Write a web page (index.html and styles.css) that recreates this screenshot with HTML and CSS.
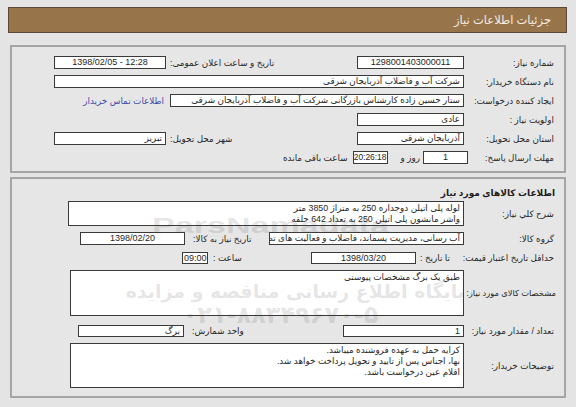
FILE: index.html
```html
<!DOCTYPE html>
<html lang="fa" dir="rtl">
<head>
<meta charset="utf-8">
<title>جزئیات اطلاعات نیاز</title>
<link rel="stylesheet" href="styles.css">
</head>
<body>
<div class="header">جزئیات اطلاعات نیاز</div>

<div class="panel p1">
  <div class="row">
    <div class="lbl">شماره نیاز:</div>
    <div class="box w107 c ltr">1298001403000011</div>
    <div class="lbl2 w191">تاریخ و ساعت اعلان عمومی:</div>
    <div class="box w112 c ltr">1398/02/05 - 12:28</div>
  </div>
  <div class="row">
    <div class="lbl">نام دستگاه خریدار:</div>
    <div class="box w410">شرکت آب و فاضلاب آذربایجان شرقی</div>
  </div>
  <div class="row">
    <div class="lbl">ایجاد کننده درخواست:</div>
    <div class="box w294">ستار حسین زاده کارشناس بازرگانی شرکت آب و فاضلاب آذربایجان شرقی</div>
    <a class="link" href="#">اطلاعات تماس خریدار</a>
  </div>
  <div class="row">
    <div class="lbl">اولویت نیاز :</div>
    <div class="box w107">عادی</div>
  </div>
  <div class="row">
    <div class="lbl">استان محل تحویل:</div>
    <div class="box w107">آذربایجان شرقی</div>
    <div class="lbl2 w191">شهر محل تحویل:</div>
    <div class="box w112">تبریز</div>
  </div>
  <div class="row">
    <div class="lbl lbl96">مهلت ارسال پاسخ:</div>
    <div class="box w45 c ltr">1</div>
    <div class="txt days">روز و</div>
    <div class="box w35 c ltr tight">20:26:18</div>
    <div class="txt remain">ساعت باقی مانده</div>
  </div>
</div>

<div class="panel p2">
  <div class="title">اطلاعات کالاهای مورد نیاز</div>
  <div class="row r-sharh">
    <div class="lbl">شرح کلي نياز:</div>
    <div class="area w396">لوله پلی اتیلن دوجداره 250 به متراژ 3850 متر<br>واشر مانشون پلی اتیلن 250 به تعداد 642 حلقه</div>
  </div>
  <div class="row r-group">
    <div class="lbl">گروه کالا:</div>
    <div class="box w195">آب رسانی، مدیریت پسماند، فاضلاب و فعالیت های تصفیه</div>
    <div class="lbl2 w84">تاریخ نیاز به کالا:</div>
    <div class="box w105 c ltr">1398/02/20</div>
  </div>
  <div class="row r-price">
    <div class="lbl">حداقل تاریخ اعتبار قیمت:</div>
    <div class="lbl2 w48">تا تاریخ :</div>
    <div class="box w105 c ltr">1398/03/20</div>
    <div class="lbl2 w103">ساعت :</div>
    <div class="box w26 c ltr">09:00</div>
  </div>
  <div class="row r-spec">
    <div class="lbl lbl-long">مشخصات کالای مورد نیاز:</div>
    <div class="area w394">طبق یک برگ مشخصات پیوستی</div>
  </div>
  <div class="row r-qty">
    <div class="lbl">تعداد / مقدار مورد نیاز:</div>
    <div class="box w121">1</div>
    <div class="lbl2 w159">واحد شمارش:</div>
    <div class="box w106">برگ</div>
  </div>
  <div class="row r-desc">
    <div class="lbl">توضیحات خریدار:</div>
    <div class="area w394">کرایه حمل به عهده فروشنده میباشد.<br>بها، اجناس پس از تایید و تحویل پرداخت خواهد شد.<br>اقلام عین درخواست باشد.</div>
  </div>
</div>

<div class="wm" aria-hidden="true">
  <div class="wm-en">ParsNamadata</div>
  <div class="wm-fa">پایگاه اطلاع رسانی مناقصه و مزایده</div>
  <div class="wm-num">۰۲۱-۸۸۳۴۹۶۷۰-۵</div>
</div>
</body>
</html>
```

FILE: styles.css
```css
* {
  box-sizing: border-box;
  margin: 0;
  padding: 0;
}

html,
body {
  background: #e4e4e4;
}

body {
  width: 576px;
  height: 407px;
  overflow: hidden;
  position: relative;
  font-family: "Liberation Sans", "DejaVu Sans", sans-serif;
  font-size: 8.8px;
  color: #262626;
}

.header {
  margin: 7px 9px 0 8px;
  height: 26px;
  background: #98744a;
  border: 1px solid #5a4838;
  color: #f4ede2;
  padding-right: 15px;
  display: flex;
  align-items: center;
  font-size: 11.5px;
}

.panel {
  margin: 0 10px;
  border: 2px solid #a5a5a5;
  background: #e6e6e6;
}

.p1 {
  margin-top: 12px;
  height: 128px;
  padding-top: 6px;
}

.p2 {
  margin-top: 4px;
  height: 221px;
}

.row {
  display: flex;
  align-items: center;
  height: 19px;
}

.lbl {
  width: 100px;
  flex: none;
  padding-right: 10px;
  white-space: nowrap;
}

.lbl96 {
  width: 96px;
}

.lbl-long {
  padding-right: 8px;
  font-size: 8.3px;
}

.lbl2 {
  flex: none;
  text-align: left;
  padding-left: 5px;
  white-space: nowrap;
}

.txt {
  flex: none;
  white-space: nowrap;
}

.days {
  margin-right: 3px;
  margin-left: 13px;
}

.remain {
  margin-right: 5px;
}

.box {
  flex: none;
  height: 13px;
  background: #fff;
  border: 1px solid #3a3a3a;
  padding: 0 3px;
  line-height: 11px;
  white-space: nowrap;
  overflow: hidden;
}

.area {
  flex: none;
  align-self: stretch;
  background: #fff;
  border: 1px solid #3a3a3a;
  padding: 1px 3px;
  line-height: 11px;
  overflow: hidden;
}

.c {
  text-align: center;
}

.ltr {
  direction: ltr;
  font-size: 9px;
}

.tight {
  padding: 0;
  font-size: 8.4px;
}

.link {
  margin-right: 6px;
  color: #3b4aa6;
  text-decoration: none;
  white-space: nowrap;
}

.w26 { width: 26px; padding: 0 1px; }
.w35 { width: 35px; }
.w45 { width: 45px; }
.w48 { width: 48px; padding-left: 4px; }
.w84 { width: 84px; padding-left: 8px; }
.w103 { width: 103px; }
.w105 { width: 105px; }
.w106 { width: 106px; }
.w107 { width: 107px; }
.w112 { width: 112px; }
.w121 { width: 121px; }
.w159 { width: 159px; padding-left: 8px; }
.w191 { width: 191px; padding-left: 4px; }
.w195 { width: 195px; }
.w294 { width: 294px; }
.w394 { width: 394px; }
.w396 { width: 396px; }
.w410 { width: 410px; }

.title {
  height: 22px;
  padding-top: 6px;
  padding-right: 9px;
  line-height: 16px;
  font-weight: bold;
  font-size: 9px;
  color: #1e1e1e;
}

.r-sharh { height: 25px; }
.r-group { height: 13px; margin-top: 6px; }
.r-price { height: 12px; margin-top: 7px; }
.r-spec { height: 46px; margin-top: 6px; }
.r-qty { height: 12px; margin-top: 9px; }
.r-desc { height: 45px; margin-top: 6px; }

.r-group .box,
.r-price .box,
.r-qty .box {
  height: 100%;
}

.wm {
  position: absolute;
  left: 0;
  top: 0;
  width: 576px;
  height: 407px;
  pointer-events: none;
  color: rgba(60, 60, 60, 0.15);
}

.wm-en {
  position: absolute;
  left: 152px;
  top: 214px;
  font-family: "Liberation Sans", sans-serif;
  font-weight: bold;
  font-size: 22px;
  line-height: 24px;
  direction: ltr;
  transform: scaleX(1.55);
  transform-origin: left top;
}

.wm-fa {
  position: absolute;
  left: 150px;
  top: 280px;
  width: 315px;
  text-align: center;
  font-family: "DejaVu Sans", sans-serif;
  font-size: 19px;
  font-weight: bold;
  white-space: nowrap;
}

.wm-num {
  position: absolute;
  left: 180px;
  top: 301px;
  width: 201px;
  text-align: center;
  font-family: "DejaVu Sans", sans-serif;
  font-size: 24px;
  font-weight: bold;
  white-space: nowrap;
}
```
